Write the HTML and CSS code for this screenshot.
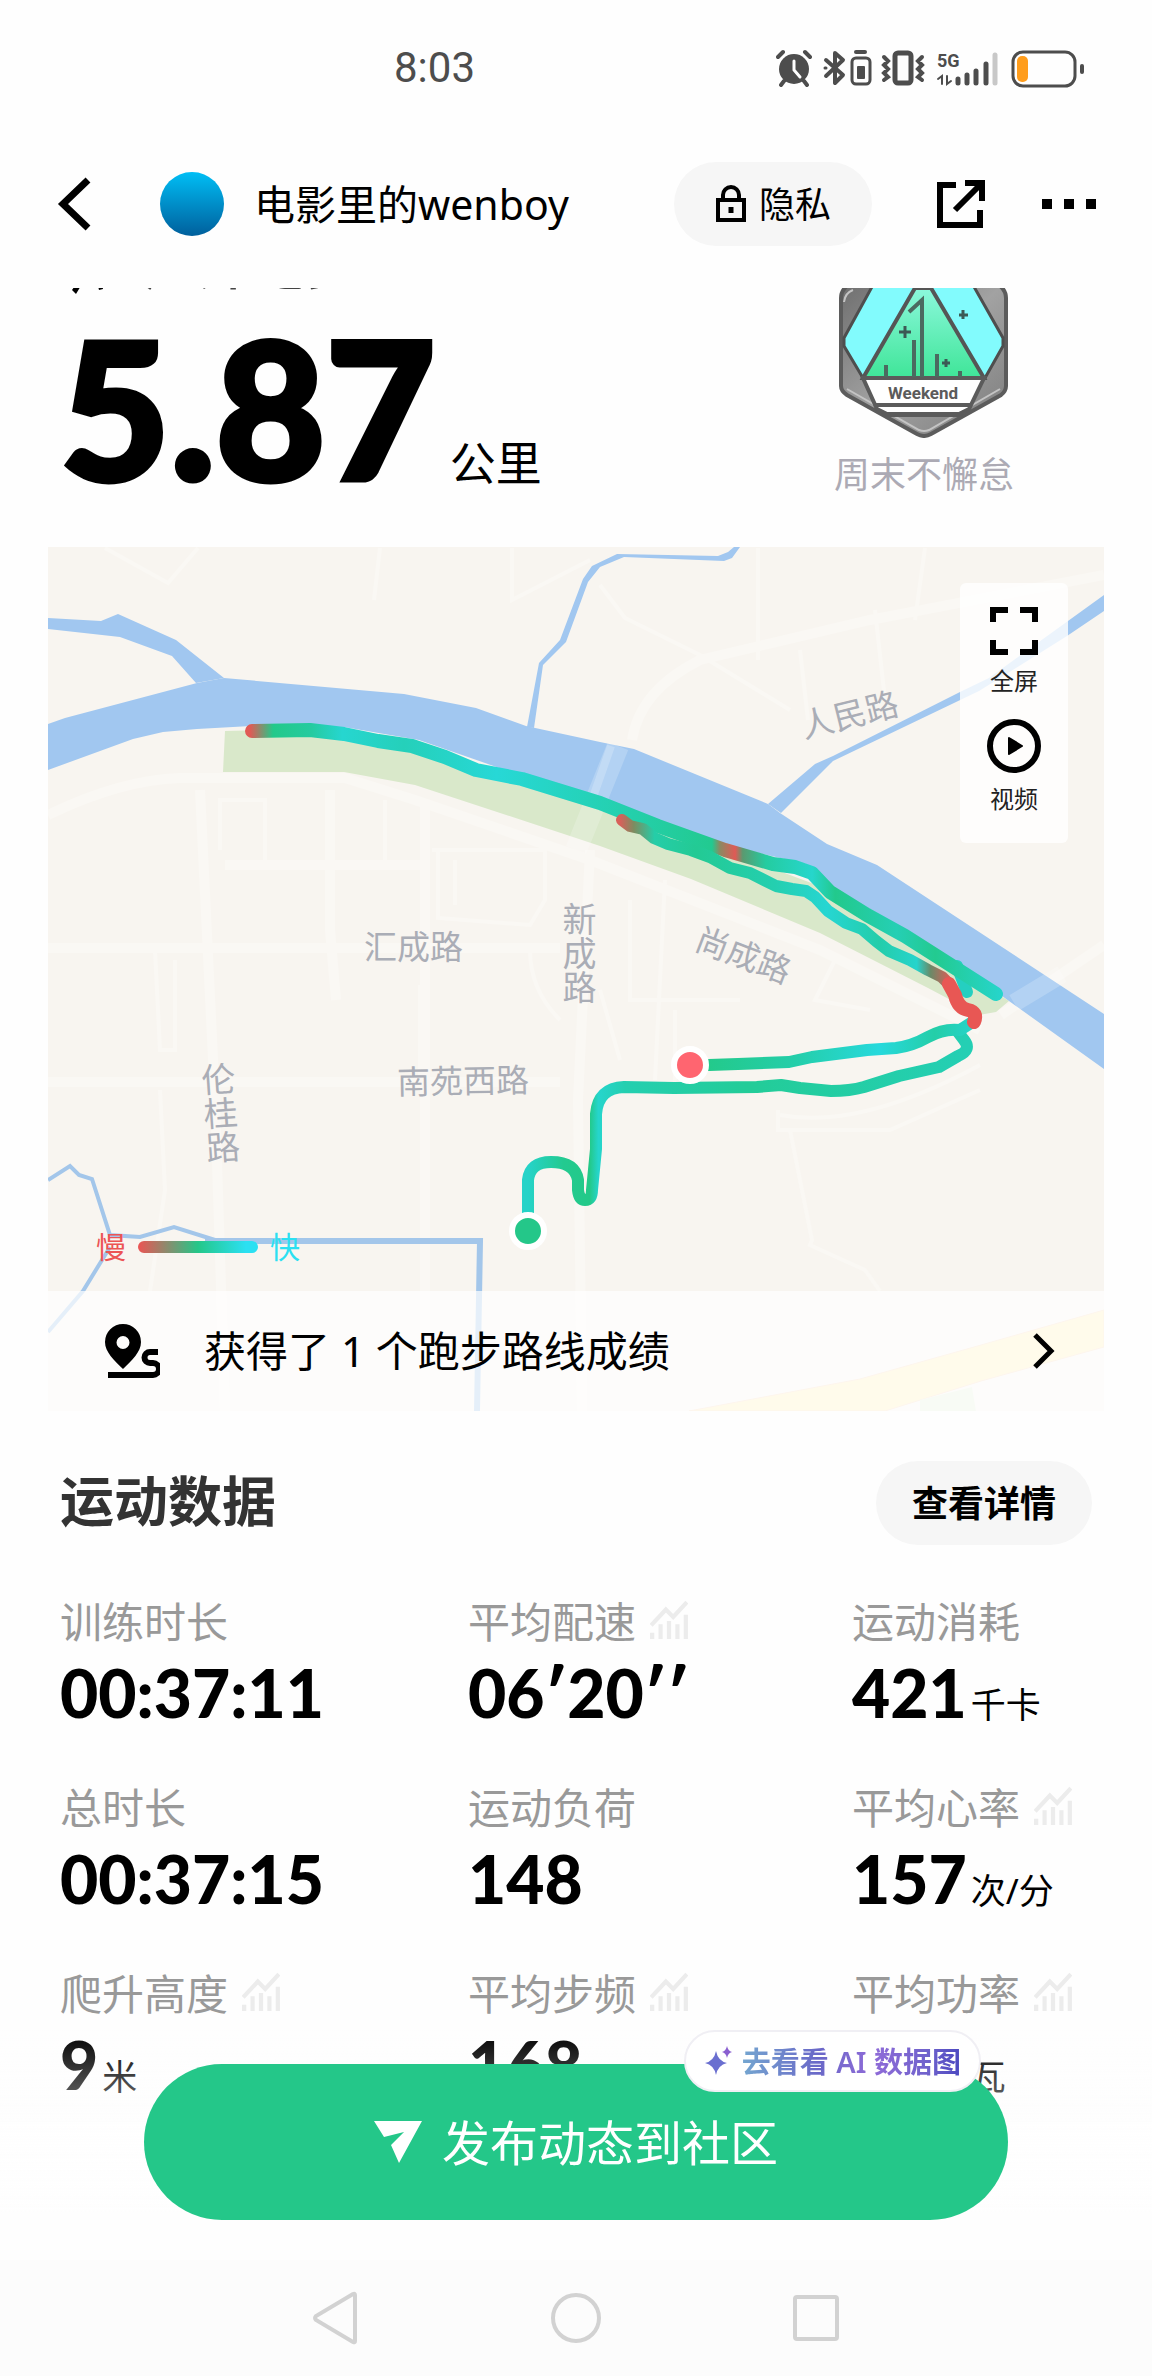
FILE: index.html
```html
<!DOCTYPE html>
<html lang="zh-CN">
<head>
    <meta charset="UTF-8">
    <meta name="viewport" content="width=device-width, initial-scale=1.0">
    <title>户外跑步 5.87 公里</title>
    <link rel="stylesheet" href="styles.css">
</head>
<body>
    <!-- Shared icons -->
    <svg class="symbols" aria-hidden="true">
        <symbol id="icon-trend" viewBox="0 0 36 38">
            <path d="M1 25 L15 10 L22 17 L35 3" fill="none" stroke="#ececec" stroke-width="4"/>
            <path d="M2 32v6M10 24v14M18 21v17M26 24v14M34 15v23" fill="none" stroke="#ececec" stroke-width="4"/>
        </symbol>
    </svg>

    <div class="status-bar">
        <time class="status-time">8:03</time>
        <svg class="status-icons" viewBox="0 0 310 40" width="310" height="40" fill="none" stroke="#4d4d4d" stroke-linecap="round">
            <!-- alarm -->
            <circle cx="18" cy="21" r="15" fill="#4d4d4d" stroke="none"/>
            <path d="M2 9l5-5M34 9l-5-5M8 33l-3 4M28 33l3 4" stroke-width="4"/>
            <path d="M18 13v9l6 7" stroke="#fff" stroke-width="3"/>
            <!-- bluetooth -->
            <path d="M50 12l17 15-8 8V5l8 7-17 16" stroke-width="4" stroke-linejoin="round"/>
            <path d="M49 20h1" stroke-width="3"/>
            <!-- bluetooth battery -->
            <path d="M80 4h9" stroke-width="4"/>
            <rect x="76" y="10" width="18" height="26" rx="4" stroke-width="3"/>
            <rect x="81" y="18" width="8" height="13" rx="1" fill="#4d4d4d" stroke="none"/>
            <!-- vibrate -->
            <rect x="119" y="5" width="16" height="30" rx="3" stroke-width="5"/>
            <path d="M108 9l4 4-4 4 4 4-4 4 4 4-4 3M146 9l-4 4 4 4-4 4 4 4-4 4 4 3" stroke-width="4"/>
            <!-- signal -->
            <text x="161" y="19" class="status-net">5G</text>
            <path d="M162 31l4-3v8M171 28v8l4-3" stroke-width="2"/>
            <path d="M182 31v4M191 27v8M200 23v12M210 16v19" stroke-width="5"/>
            <path d="M219 7v28" stroke="#c8c8c8" stroke-width="5"/>
            <!-- battery -->
            <rect x="237" y="4" width="62" height="34" rx="10" stroke-width="3"/>
            <rect x="241" y="8" width="11" height="26" rx="5" fill="#ff9d1c" stroke="none"/>
            <path d="M306 18v6" stroke-width="4"/>
        </svg>
    </div>

    <header class="top-bar">
        <button class="icon-button back" aria-label="返回">
            <svg viewBox="0 0 36 56" width="36" height="56" fill="none" stroke="#000" stroke-width="7"><path d="M32 4L7 28l25 24"/></svg>
        </button>
        <span class="avatar"></span>
        <span class="user-name">电影里的wenboy</span>
        <button class="pill privacy">
            <svg viewBox="0 0 32 38" width="32" height="38" fill="none" stroke="#000" stroke-width="4"><path d="M3 15h26v20H3zM8 15v-5a8 8 0 0 1 16 0v5"/><path d="M16 22v6" stroke-width="5"/></svg>
            <span>隐私</span>
        </button>
        <button class="icon-button share" aria-label="分享">
            <svg viewBox="0 0 50 50" width="50" height="50" fill="none" stroke="#000" stroke-width="6"><path d="M20 6H4v40h40V31M29 4h17v18M45 5L19 31"/></svg>
        </button>
        <button class="icon-button more" aria-label="更多">
            <svg viewBox="0 0 54 10" width="54" height="10"><path d="M0 0h10v10H0zM22 0h10v10H22zM44 0h10v10H44z"/></svg>
        </button>
    </header>

    <main>
        <section class="summary">
            <div class="distance">
                <h1 class="sport-title">
                    <svg viewBox="0 0 40 54" width="40" height="54"><path d="M14 30L0 50l4 4 12-20zM22 30l5 20 4-1-3-22z"/></svg>
                    户外跑步
                </h1>
                <p class="distance-value"><strong>5.87</strong><span>公里</span></p>
            </div>
            <figure class="badge">
                <svg viewBox="0 0 170 150" width="170" height="150">
                    <defs>
                        <linearGradient id="metal" x1="0" y1="0" x2="1" y2="1">
                            <stop offset="0" stop-color="#6e6e6e"/>
                            <stop offset=".5" stop-color="#a2a2a2"/>
                            <stop offset="1" stop-color="#7c7c7c"/>
                        </linearGradient>
                        <linearGradient id="peak" x1="0" y1="0" x2="0" y2="1">
                            <stop offset="0" stop-color="#8cf8dc"/>
                            <stop offset="1" stop-color="#3fe598"/>
                        </linearGradient>
                    </defs>
                    <path d="M14 -6Q2 0 2 10V98Q2 103 8 107L78 146Q85 150 92 146L162 107Q167 103 167 98V10Q167 0 155 -6z" fill="url(#metal)" stroke="#5c5c5c" stroke-width="4"/>
                    <path d="M5 14Q6 5 14 2M8 101l72 41q5 2 10 0l71-41" fill="none" stroke="#c4c4c4" stroke-width="2"/>
                    <path d="M34 -3L5 50V58L24 90H146L164 58V50L134 -3z" fill="#82fbfd" stroke="#4e4e4e" stroke-width="3"/>
                    <path d="M76 0L24 90H145L92 0z" fill="url(#peak)" stroke="#555" stroke-width="4"/>
                    <path d="M24 90H145L130 121 120 126H48L38 121z" fill="#fff" stroke="#5b5b5b" stroke-width="4"/>
                    <path d="M36 117H132M44 127H124" stroke="#5b5b5b" stroke-width="4"/>
                    <path d="M70 24L83 12V89M75 52V89M47 77V89M98 66V89M121 83V89" fill="none" stroke="#4b6a60" stroke-width="4"/>
                    <path d="M66 38v12M60 44h12M124 22v9M120 27h9M107 71v8M103 75h8" stroke="#3c5a55" stroke-width="3"/>
                    <text x="84" y="111" text-anchor="middle" class="badge-text">Weekend</text>
                </svg>
                <figcaption>周末不懈怠</figcaption>
            </figure>
        </section>

        <section class="map">
            <svg class="map-canvas" viewBox="48 547 1056 864" role="img" aria-label="跑步轨迹">
                <defs>
                    <linearGradient id="pace-river" gradientUnits="userSpaceOnUse" x1="250" y1="0" x2="1020" y2="0">
                        <stop offset="0" stop-color="#e05a55"/>
                        <stop offset=".03" stop-color="#22c98a"/>
                        <stop offset=".08" stop-color="#25cba0"/>
                        <stop offset=".12" stop-color="#26d6d0"/>
                        <stop offset=".2" stop-color="#25d0ba"/>
                        <stop offset=".32" stop-color="#27d8d6"/>
                        <stop offset=".5" stop-color="#24cfaa"/>
                        <stop offset=".6" stop-color="#22ca90"/>
                        <stop offset=".61" stop-color="#8a8a62"/>
                        <stop offset=".63" stop-color="#e05a55"/>
                        <stop offset=".64" stop-color="#5a9a70"/>
                        <stop offset=".67" stop-color="#24cca0"/>
                        <stop offset=".73" stop-color="#26d6cc"/>
                        <stop offset=".76" stop-color="#22c98c"/>
                        <stop offset=".84" stop-color="#25cfb4"/>
                        <stop offset=".89" stop-color="#23ca90"/>
                        <stop offset="1" stop-color="#27d8dc"/>
                    </linearGradient>
                    <linearGradient id="pace-inner" gradientUnits="userSpaceOnUse" x1="620" y1="0" x2="965" y2="0">
                        <stop offset="0" stop-color="#d8605a"/>
                        <stop offset=".04" stop-color="#7d8c60"/>
                        <stop offset=".1" stop-color="#25cda8"/>
                        <stop offset=".22" stop-color="#23ca94"/>
                        <stop offset=".45" stop-color="#24cfb0"/>
                        <stop offset=".6" stop-color="#26d6d2"/>
                        <stop offset=".75" stop-color="#24cdaa"/>
                        <stop offset=".86" stop-color="#26d4cc"/>
                        <stop offset=".9" stop-color="#6a8a68"/>
                        <stop offset=".96" stop-color="#e05a55"/>
                    </linearGradient>
                    <linearGradient id="pace-end" gradientUnits="userSpaceOnUse" x1="700" y1="0" x2="976" y2="0">
                        <stop offset="0" stop-color="#23c988"/>
                        <stop offset=".35" stop-color="#24ceaa"/>
                        <stop offset=".65" stop-color="#27d9dc"/>
                        <stop offset=".85" stop-color="#24cea8"/>
                        <stop offset="1" stop-color="#26d4cc"/>
                    </linearGradient>
                    <linearGradient id="pace-start" gradientUnits="userSpaceOnUse" x1="528" y1="0" x2="968" y2="0">
                        <stop offset="0" stop-color="#26d3c8"/>
                        <stop offset=".08" stop-color="#23ca90"/>
                        <stop offset=".14" stop-color="#23c988"/>
                        <stop offset=".16" stop-color="#26d5cc"/>
                        <stop offset=".22" stop-color="#24cfb0"/>
                        <stop offset=".5" stop-color="#23cc98"/>
                        <stop offset="1" stop-color="#24cfb4"/>
                    </linearGradient>
                </defs>
                <rect x="48" y="547" width="1056" height="864" fill="#f8f5f0"/>

                <!-- minor roads -->
                <g class="roads">
                    <path class="wide" d="M48 815Q120 780 180 778H345L415 800L590 860L820 950L980 1030"/>
                    <path class="wide" d="M200 790L215 1100 225 1411M330 790V930L336 1000M225 865H420M48 948H560M48 1082H560"/>
                    <path class="wide" d="M425 800V1411M590 850L578 1100 582 1411"/>
                    <path d="M220 850V800H265V865M385 800V868M432 850H545V900L530 925 438 918V850M455 860V905"/>
                    <path d="M105 548L168 583 198 548M380 548L374 600M512 548V600L590 560M758 548V660M925 548L915 620"/>
                    <path class="wide" d="M632 740Q640 690 700 660L870 620 1104 575"/>
                    <path d="M600 585L625 618 700 655 790 710M800 650L808 720M875 610L885 700"/>
                    <path d="M665 880L655 1080M630 900V1000H740M675 1010V1080M600 990L620 1060M835 960L815 1000 870 1010"/>
                    <path d="M778 1110V1130H890L980 1090M780 1115Q860 1130 980 1065M790 1130L812 1240 810 1245 865 1270 880 1291"/>
                    <path d="M155 950L160 1050 175 1050V960M160 1090L165 1190 150 1291M420 985V1080M530 950Q530 990 560 1020"/>
                    <path class="wide" d="M1001 1015L1104 945"/>
                </g>

                <!-- park and water -->
                <path d="M225 731L344 728 420 745 600 803 710 845 830 890 1009 1001 996 1012 979 1015 928 988 820 933 691 879 600 846 576 838 415 785 344 772H223z" fill="#d9e8ca"/>
                <g fill="#a1c7f0">
                    <path d="M48 724L65 718 197 683 224 678 404 694 476 708 526 726 600 742 634 749 768 804 780 813 827 844 877 865 1104 1014V1069L1009 1001 928 943 827 884 806 864 708 841 600 803 419 740 344 727 251 726 197 729 163 732 133 739 48 770z"/>
                    <path d="M48 618L101 621 118 614 176 640 224 678 196 683 172 656 120 637 48 629z"/>
                    <path d="M527 727L539 663 560 640 583 579 592 566 617 554 718 556 728 552 734 547H740L732 558 724 561 624 557 600 567 588 582 566 642 543 665 534 728z"/>
                    <path d="M768 804L815 764 833 756 962 691 989 678 1104 595V611L1067 636 979 691 833 761 781 813z"/>
                </g>
                <g fill="none" stroke="#a3c6ea">
                    <path d="M48 1180L70 1166 79 1175 92 1179 110 1235 140 1237 174 1227 215 1240M110 1247L83 1291 48 1332" stroke-width="4"/>
                    <path d="M205 1241H480L477 1411" stroke-width="6"/>
                </g>
                <g fill="none" stroke="#fff" stroke-opacity=".2">
                    <path d="M618 746L576 850" stroke-width="22"/>
                    <path d="M611 746L592 800" stroke-width="8"/>
                    <path d="M1014 1003L1062 974" stroke-width="18"/>
                </g>
                <path d="M689 1411L860 1379 974 1347 1104 1310V1347L981 1381 885 1411z" fill="#fff0b8" stroke="#f8dcc0"/>
                <path d="M920 1411V1400L972 1387 976 1411z" fill="#e6f0dc"/>

                <!-- street names -->
                <g class="street">
                    <text x="364" y="959">汇成路</text>
                    <text x="397" y="1093" transform="rotate(-1 464 1082)">南苑西路</text>
                    <text x="578" y="902" class="vertical">新成路</text>
                    <text x="219" y="1062" class="vertical" transform="rotate(-4 219 1112)">伦桂路</text>
                    <text x="800" y="727" transform="rotate(-14 849 715)">人民路</text>
                    <text x="694" y="967" transform="rotate(21 743 955)">尚成路</text>
                </g>

                <!-- track, coloured by pace -->
                <g class="track">
                    <path d="M967 992L957 966" stroke="#25cfc0"/>
                    <path d="M252 731L310 730 344 734 378 741 412 746 445 757 476 770 522 779 600 803 658 826 725 850 773 864 795 867 812 873 830 892 867 915 905 936 938 957 996 994" stroke="url(#pace-river)" class="wide"/>
                    <path d="M622 820L630 826 643 829 654 838 668 844 691 850 710 857 730 868 750 873 776 886 792 889 806 891 815 897 828 911 846 923 862 929 876 941 889 951 910 960 928 970 942 977 949 984" stroke="url(#pace-inner)"/>
                    <path d="M528 1213V1180Q530 1162 551 1162 575 1162 578 1180V1190Q579 1200 585 1200 592 1200 592 1190L596 1149V1114Q598 1088 624 1087L674 1088 757 1087 781 1085 800 1088 831 1091Q850 1091 864 1087L899 1076 939 1067 958 1056Q972 1050 964 1040L958 1032" stroke="url(#pace-start)"/>
                    <path d="M709 1065L738 1064 789 1062 812 1057 867 1050 896 1048Q912 1046 928 1037T960 1030L974 1021" stroke="url(#pace-end)"/>
                    <path d="M949 984L955 995Q958 1008 968 1010T974 1022" stroke="#e85754" class="wide"/>
                </g>
                <circle cx="690" cy="1065" r="16" fill="#ff6570" stroke="#fff" stroke-width="6"/>
                <circle cx="528" cy="1231" r="16" fill="#24c789" stroke="#fff" stroke-width="6"/>
            </svg>

            <div class="map-tools">
                <button class="map-tool">
                    <svg viewBox="0 0 48 48" width="48" height="48" fill="none" stroke="#000" stroke-width="6"><path d="M18 3H3v12M30 3h15v12M18 45H3V33M30 45h15V33"/></svg>
                    全屏
                </button>
                <button class="map-tool">
                    <svg viewBox="0 0 54 54" width="54" height="54"><circle cx="27" cy="27" r="24" fill="none" stroke="#000" stroke-width="6"/><path d="M22 19l13 8-13 8z" stroke="#000" stroke-width="2" stroke-linejoin="round"/></svg>
                    视频
                </button>
            </div>

            <div class="legend">
                <span class="slow">慢</span>
                <span class="legend-bar"></span>
                <span class="fast">快</span>
            </div>

            <a class="route-result" href="#routes">
                <svg viewBox="0 0 56 56" width="56" height="56"><path d="M19 1a18 18 0 0 1 18 18c0 10-9 18-18 27C10 37 1 29 1 19A18 18 0 0 1 19 1zm0 12a6 6 0 1 0 0 13 6 6 0 0 0 0-13z" fill-rule="evenodd"/><path d="M54 29h-8a5 5 0 0 0 0 11h3a6 6 0 0 1 0 12H4" fill="none" stroke="#000" stroke-width="6"/></svg>
                <span class="route-text">获得了 1 个跑步路线成绩</span>
                <svg viewBox="0 0 24 36" width="24" height="36" fill="none" stroke="#000" stroke-width="5"><path d="M3 2l16 16L3 34"/></svg>
            </a>
        </section>

        <section class="data">
            <div class="data-head">
                <h2>运动数据</h2>
                <button class="pill details"><span>查看详情</span></button>
            </div>
            <dl class="stats">
                <div class="stat">
                    <dt>训练时长</dt>
                    <dd>00:37:11</dd>
                </div>
                <div class="stat">
                    <dt>平均配速 <svg><use href="#icon-trend"/></svg></dt>
                    <dd>06′20′′</dd>
                </div>
                <div class="stat">
                    <dt>运动消耗</dt>
                    <dd>421<span>千卡</span></dd>
                </div>
                <div class="stat">
                    <dt>总时长</dt>
                    <dd>00:37:15</dd>
                </div>
                <div class="stat">
                    <dt>运动负荷</dt>
                    <dd>148</dd>
                </div>
                <div class="stat">
                    <dt>平均心率 <svg><use href="#icon-trend"/></svg></dt>
                    <dd>157<span>次/分</span></dd>
                </div>
                <div class="stat">
                    <dt>爬升高度 <svg><use href="#icon-trend"/></svg></dt>
                    <dd>9<span>米</span></dd>
                </div>
                <div class="stat">
                    <dt>平均步频 <svg><use href="#icon-trend"/></svg></dt>
                    <dd>168</dd>
                </div>
                <div class="stat">
                    <dt>平均功率 <svg><use href="#icon-trend"/></svg></dt>
                    <dd>216<span>瓦</span></dd>
                </div>
            </dl>
        </section>
    </main>

    <footer class="dock">
        <div class="publish-area">
            <div class="publish-wrap">
                <button class="publish">
                    <svg viewBox="0 0 48 44" width="48" height="44" fill="#fff"><path d="M0 1h48L25 43 17 25 30 12 10 17z"/></svg>
                    <span>发布动态到社区</span>
                </button>
                <a class="ai-chip" href="#ai">
                    <svg viewBox="0 0 30 30" width="30" height="30"><path d="M12 5q2 10 11 12-9 2-11 12Q10 19 1 17q9-2 11-12z" fill="#6a6fd0"/><path d="M23 0q1 5 5 6-4 1-5 6-1-5-5-6 4-1 5-6z" fill="#8a5fd0"/></svg>
                    <span>去看看 AI 数据图</span>
                </a>
            </div>
        </div>
        <nav class="system-nav">
            <button aria-label="返回"><svg viewBox="0 0 50 54" width="50" height="54"><path d="M44 4v46q0 2-2 1L5 29q-2-2 0-4L42 3q2-1 2 1z"/></svg></button>
            <button aria-label="主页"><svg viewBox="0 0 50 54" width="50" height="54"><circle cx="25" cy="27" r="23"/></svg></button>
            <button aria-label="最近任务"><svg viewBox="0 0 50 54" width="50" height="54"><rect x="4" y="6" width="42" height="42" rx="2"/></svg></button>
        </nav>
    </footer>
</body>
</html>
```
FILE: styles.css
```css
* {
    box-sizing: border-box;
}
body {
    margin: 0;
    background-color: #fefefe;
    color: #000;
    font-family: "Noto Sans", "Noto Sans CJK SC", sans-serif;
}
h1, h2, p, dl, dt, dd, figure {
    margin: 0;
}
svg {
    display: block;
    flex: none;
}
button {
    padding: 0;
    border: none;
    background: none;
    color: inherit;
    font-family: inherit;
    cursor: pointer;
}
a {
    color: inherit;
    text-decoration: none;
}
.symbols {
    display: none;
}

/* Status bar */
.status-bar {
    display: flex;
    align-items: center;
    justify-content: space-between;
    height: 136px;
    padding: 0 66px 0 394px;
}
.status-time {
    color: #4d4d4d;
    font: 400 42px/48px Roboto, sans-serif;
}
.status-net {
    fill: #4d4d4d;
    stroke: none;
    font: bold 18px Roboto, sans-serif;
}

/* Top bar */
.top-bar {
    display: flex;
    align-items: center;
    height: 152px;
    padding: 0 56px 16px;
}
.avatar {
    width: 64px;
    height: 64px;
    margin-left: 68px;
    border-radius: 50%;
    background: linear-gradient(#00bef5, #005f9c);
}
.user-name {
    flex: 1;
    margin-left: 30px;
    font-size: 41px;
    line-height: 56px;
}
.pill {
    display: flex;
    align-items: center;
    justify-content: center;
    height: 84px;
    border-radius: 42px;
    background-color: #f6f6f6;
    font-size: 36px;
}
.pill span,
.publish span {
    padding-bottom: 4px;
}
.privacy {
    gap: 12px;
    width: 198px;
}
.share {
    margin-left: 64px;
}
.more {
    margin-left: 56px;
}

/* Summary */
.summary {
    display: flex;
    justify-content: space-between;
    height: 259px;
    padding: 0 138px 0 60px;
}
.sport-title {
    display: flex;
    align-items: flex-end;
    height: 6px;
    padding-left: 12px;
    overflow: hidden;
    color: #444;
    font-size: 54px;
    font-weight: 500;
    line-height: 60px;
    gap: 32px;
}
.distance-value {
    display: flex;
    align-items: baseline;
    gap: 14px;
}
.distance-value strong {
    font: 900 190px/224px Lato, sans-serif;
    -webkit-text-stroke: 5px #000;
}
.distance-value span {
    font-size: 46px;
}
.badge {
    display: flex;
    flex-direction: column;
    align-items: center;
    gap: 12px;
}
.badge-text {
    fill: #5b5b5b;
    font: bold 17px Roboto, sans-serif;
}
.badge figcaption {
    color: #acaab4;
    font-size: 36px;
    line-height: 50px;
}

/* Map */
.map {
    position: relative;
    margin: 0 48px;
}
.map-canvas {
    width: 100%;
    height: auto;
}
.roads path {
    fill: none;
    stroke: #faf8f4;
    stroke-width: 4px;
}
.roads .wide {
    stroke-width: 10px;
}
.street {
    fill: #aaadb6;
    font-size: 33px;
}
.street .vertical {
    writing-mode: vertical-rl;
    font-size: 34px;
}
.track path {
    fill: none;
    stroke-width: 12px;
    stroke-linecap: round;
    stroke-linejoin: round;
}
.track .wide {
    stroke-width: 14px;
}
.map-tools {
    position: absolute;
    top: 36px;
    right: 36px;
    display: flex;
    flex-direction: column;
    gap: 22px;
    width: 108px;
    padding: 24px 0 28px;
    border-radius: 6px;
    background-color: rgba(255, 255, 255, 0.8);
}
.map-tool {
    display: flex;
    flex-direction: column;
    align-items: center;
    gap: 10px;
    color: #222;
    font-size: 24px;
    line-height: 32px;
}
.legend {
    position: absolute;
    bottom: 142px;
    left: 48px;
    display: flex;
    align-items: center;
    gap: 12px;
    font-size: 30px;
    line-height: 44px;
}
.legend-bar {
    width: 120px;
    height: 12px;
    border-radius: 6px;
    background: linear-gradient(90deg, #ec5454, #24c789 50%, #2be0f2 90%);
}
.slow {
    color: #ec5454;
}
.fast {
    color: #2be0f2;
}
.route-result {
    position: absolute;
    right: 0;
    bottom: 0;
    left: 0;
    display: flex;
    align-items: center;
    height: 120px;
    padding: 0 48px 0 56px;
    background-color: rgba(255, 255, 255, 0.72);
}
.route-text {
    flex: 1;
    margin-left: 44px;
    padding-bottom: 6px;
    font-size: 42px;
}

/* Data */
.data {
    padding: 50px 60px 200px;
}
.data-head {
    display: flex;
    align-items: flex-start;
    justify-content: space-between;
    color: #333;
}
.data-head h2 {
    font-size: 54px;
    line-height: 80px;
}
.details {
    width: 216px;
    color: #000;
    font-weight: bold;
}
.stats {
    display: grid;
    grid-template-columns: 408fr 384fr 240fr;
    row-gap: 30px;
    margin-top: 44px;
}
.stat dt {
    display: flex;
    align-items: center;
    gap: 14px;
    height: 60px;
    color: #999;
    font-size: 42px;
    white-space: nowrap;
}
.stat dt svg {
    width: 38px;
    height: 40px;
}
.stat dd {
    display: flex;
    align-items: baseline;
    gap: 4px;
    height: 96px;
    font: 900 66px/88px Lato, sans-serif;
    white-space: nowrap;
}
.stat dd span {
    font: 35px "Noto Sans", "Noto Sans CJK SC", sans-serif;
}

/* Bottom dock */
.dock {
    position: fixed;
    right: 0;
    bottom: 0;
    left: 0;
}
.publish-area {
    padding: 34px 144px 40px;
    background: linear-gradient(rgba(254, 254, 254, 0), #fefefe 80%);
}
.publish-wrap {
    position: relative;
}
.publish {
    display: flex;
    align-items: center;
    justify-content: center;
    gap: 20px;
    width: 100%;
    height: 156px;
    border-radius: 78px;
    background-color: #24c789;
    color: #fff;
    font-size: 48px;
}
.ai-chip {
    position: absolute;
    top: -34px;
    right: 27px;
    display: flex;
    align-items: center;
    gap: 8px;
    height: 62px;
    padding: 0 18px;
    border: 2px solid #f0eff4;
    border-radius: 31px;
    background-color: #fff;
    font-size: 29px;
    font-weight: 600;
}
.ai-chip span {
    padding-bottom: 2px;
    background: linear-gradient(90deg, #74a6d0, #6a68c8 35%, #8f6bd8 60%, #6f62cc 85%, #4b48c0);
    -webkit-background-clip: text;
    background-clip: text;
    color: transparent;
}
.system-nav {
    display: flex;
    align-items: center;
    justify-content: center;
    gap: 190px;
    height: 116px;
    background-color: #fcfcfc;
}
.system-nav svg {
    fill: none;
    stroke: #d2d2d2;
    stroke-width: 4px;
}
```
